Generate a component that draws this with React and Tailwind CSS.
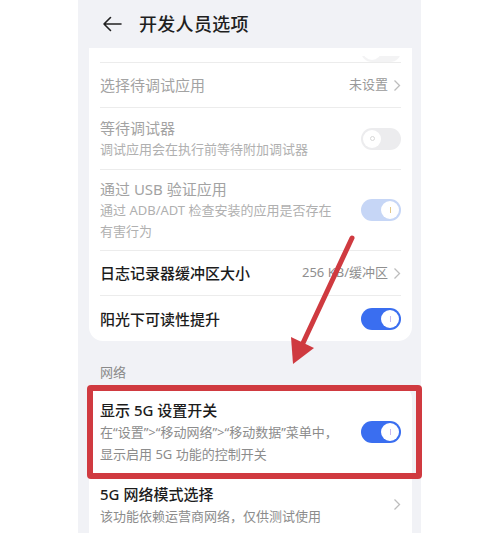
const FONT = { fontFamily: '"Noto Sans", "Noto Sans CJK SC", sans-serif' }

function Toggle({ on = false, disabled = false }) {
  const bg = on ? (disabled ? 'bg-[#c6d6f6]' : 'bg-[#3a6ef0]') : 'bg-[#ececee]'
  return (
    <div className={`w-[40px] h-[22px] rounded-full flex items-center px-[2px] shrink-0 ${bg} ${on ? 'justify-end' : 'justify-start'}`}>
      <div className="w-[18px] h-[18px] rounded-full bg-white flex items-center justify-center">
        {on ? (
          <div className={`w-[1px] h-[6px] ${disabled ? 'bg-[#e3c98a]' : 'bg-[#c9b8f0]'}`} />
        ) : (
          <div className="w-[5px] h-[5px] rounded-full border border-[#d8d8d8]" />
        )}
      </div>
    </div>
  )
}

function Chevron() {
  return (
    <svg width="8" height="13" viewBox="0 0 8 13" className="shrink-0">
      <polyline points="1.5,1.5 6.5,6.5 1.5,11.5" fill="none" stroke="#bdbdbd" strokeWidth="1.3" />
    </svg>
  )
}

function Divider() {
  return <div className="mx-[11px] h-px bg-[#ececec]" />
}

function Row({ title, sub, right, dim, bold, className = '' }) {
  return (
    <div className={`flex justify-between items-center px-[11px] ${className}`}>
      <div className="flex flex-col">
        <div className={`text-[15px] leading-[22px] ${dim ? 'text-[#a3a3a3]' : 'text-[#1c1c1c]'} ${bold ? 'font-medium' : ''}`}>{title}</div>
        {sub && <div className={`text-[13px] leading-[21px] whitespace-nowrap ${dim ? 'text-[#b0b0b0]' : 'text-[#8c8c8c]'}`}>{sub}</div>}
      </div>
      {right}
    </div>
  )
}

export default function App() {
  return (
    <div className="relative w-[500px] h-[533px] bg-white overflow-hidden" style={FONT}>
      <div className="ml-[78px] w-[343px] h-full bg-[#f1f2f6] flex flex-col">
        <div className="h-[48px] shrink-0 flex items-center pl-[24px] gap-[17px]">
          <svg width="20" height="16" viewBox="0 0 20 16">
            <path d="M19 8H2M8.5 1.5L2 8l6.5 6.5" fill="none" stroke="#222" strokeWidth="1.6" strokeLinecap="round" strokeLinejoin="round" />
          </svg>
          <span className="text-[18px] font-medium text-[#1f1f1f] tracking-[0.3px]">开发人员选项</span>
        </div>

        <div className="ml-[11px] w-[323px] bg-white rounded-b-[14px]">
          {/* bottom of a toggle scrolled under the header */}
          <div className="h-[14px] overflow-hidden flex justify-end pr-[11px] items-end">
            <div className="w-[40px] h-[6px] overflow-hidden">
              <div className="-mt-[16px] opacity-60"><Toggle /></div>
            </div>
          </div>
          <Divider />
          <Row
            className="h-[44px]"
            dim
            title="选择待调试应用"
            right={
              <div className="flex items-center gap-[5px] text-[13px] text-[#9a9a9a]">
                未设置 <Chevron />
              </div>
            }
          />
          <Divider />
          <Row className="h-[61px]" dim title="等待调试器" sub="调试应用会在执行前等待附加调试器" right={<Toggle />} />
          <Divider />
          <Row
            className="h-[80px]"
            dim
            title="通过 USB 验证应用"
            sub={<>通过 ADB/ADT 检查安装的应用是否存在<br />有害行为</>}
            right={<Toggle on disabled />}
          />
          <Divider />
          <Row
            className="h-[44px]"
            bold
            title="日志记录器缓冲区大小"
            right={
              <div className="flex items-center gap-[5px] text-[13px] text-[#8f8f8f]">
                256 KB/缓冲区 <Chevron />
              </div>
            }
          />
          <Divider />
          <Row className="h-[45px]" bold title="阳光下可读性提升" right={<Toggle on />} />
        </div>

        <div className="pl-[22px] pt-[21px] pb-[3px] text-[13px] leading-[20px] text-[#8a8a8a]">网络</div>

        <div className="ml-[11px] w-[323px] bg-white rounded-t-[14px] flex-1">
          <div className="h-[92px] flex justify-between items-start px-[11px] pt-[14px]">
            <div className="flex flex-col">
              <div className="text-[15px] leading-[22px] text-[#1c1c1c] font-medium">显示 5G 设置开关</div>
              <div className="text-[13px] leading-[22px] whitespace-nowrap text-[#8c8c8c]">
                在“设置”&gt;“移动网络”&gt;“移动数据”菜单中，<br />显示启用 5G 功能的控制开关
              </div>
            </div>
            <div className="mt-[22px]"><Toggle on /></div>
          </div>
          <Divider />
          <div className="flex justify-between items-start px-[11px] pt-[5px]">
            <div className="flex flex-col">
              <div className="text-[15px] leading-[22px] text-[#1c1c1c] font-medium">5G 网络模式选择</div>
              <div className="text-[13px] leading-[22px] whitespace-nowrap text-[#8c8c8c]">该功能依赖运营商网络，仅供测试使用</div>
            </div>
            <div className="mt-[15px]"><Chevron /></div>
          </div>
        </div>
      </div>

      <div className="absolute left-[87px] top-[385px] w-[335px] h-[94px] border-[6px] border-[#d03a40] rounded-[4px] pointer-events-none" />

      <svg className="absolute left-0 top-0 pointer-events-none" width="500" height="533" viewBox="0 0 500 533">
        <line x1="352" y1="238" x2="303" y2="343" stroke="#cf3a40" strokeWidth="5" strokeLinecap="round" />
        <polygon points="293,364 291,337 314,348" fill="#cf3a40" />
      </svg>
    </div>
  )
}
